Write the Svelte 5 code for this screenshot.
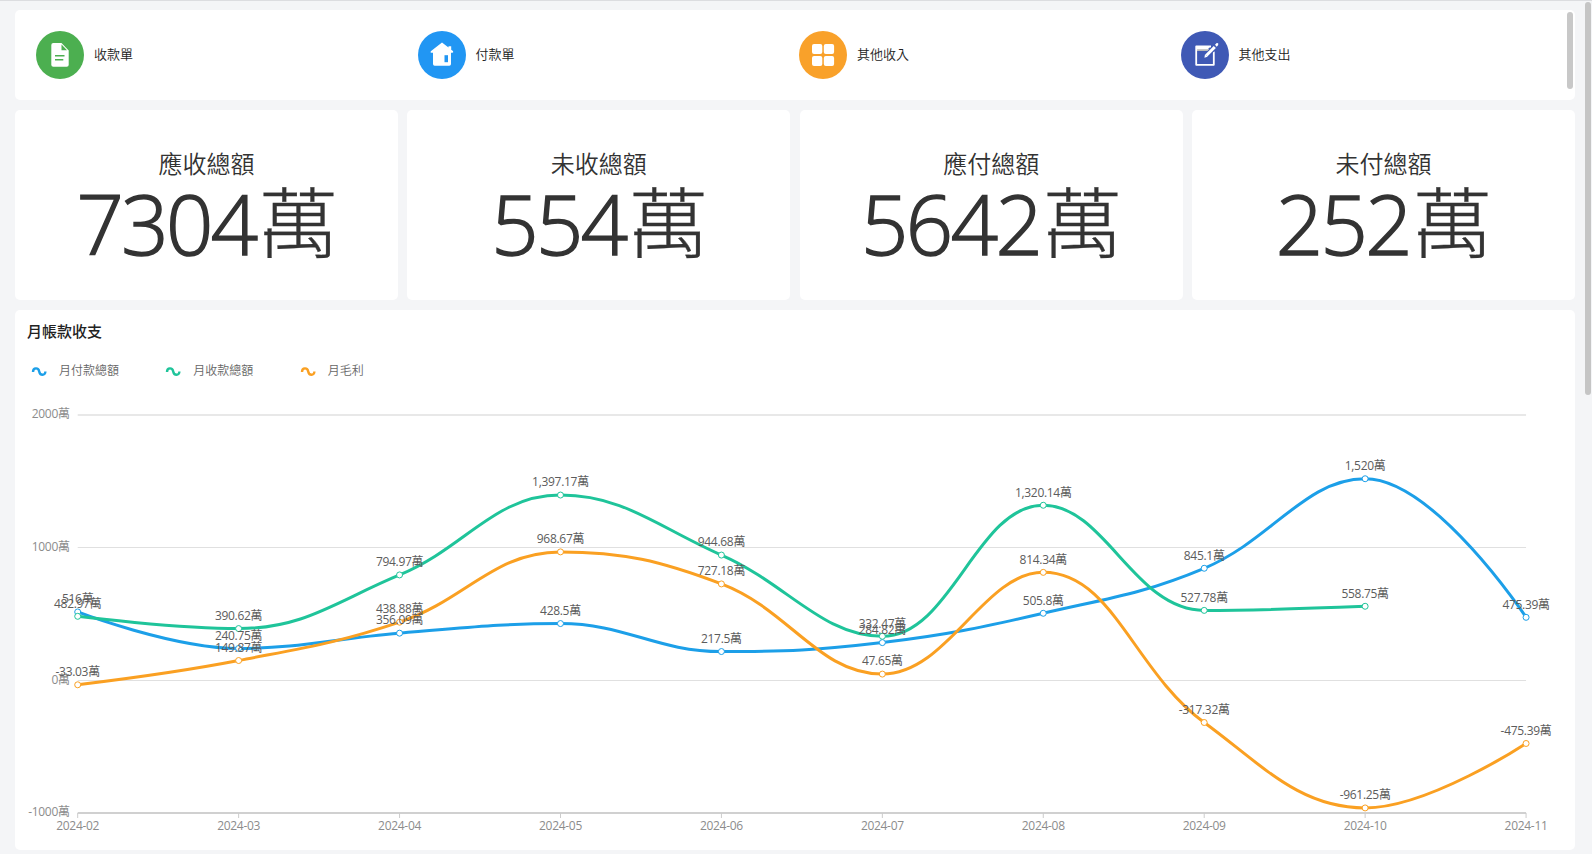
<script>
  const shortcuts = [
    { label: '收款單', color: '#4caf50', icon: 'doc' },
    { label: '付款單', color: '#2196f3', icon: 'home' },
    { label: '其他收入', color: '#f9a12a', icon: 'grid' },
    { label: '其他支出', color: '#3f59b5', icon: 'edit' },
  ];

  const totals = [
    { label: '應收總額', value: '7304' },
    { label: '未收總額', value: '554' },
    { label: '應付總額', value: '5642' },
    { label: '未付總額', value: '252' },
  ];

  const months = ['2024-02', '2024-03', '2024-04', '2024-05', '2024-06', '2024-07', '2024-08', '2024-09', '2024-10', '2024-11'];

  const series = [
    { name: '月付款總額', color: '#1c9fe8', data: [516, 240.75, 356.09, 428.5, 217.5, 284.82, 505.8, 845.1, 1520, 475.39] },
    { name: '月收款總額', color: '#1fc49a', data: [482.97, 390.62, 794.97, 1397.17, 944.68, 332.47, 1320.14, 527.78, 558.75] },
    { name: '月毛利', color: '#faa022', data: [-33.03, 149.87, 438.88, 968.67, 727.18, 47.65, 814.34, -317.32, -961.25, -475.39] },
  ];

  const ticks = [
    { value: 2000, y: 25 },
    { value: 1000, y: 157.5 },
    { value: 0, y: 290.5 },
    { value: -1000, y: 423 },
  ];
  const baseY = 423;

  const left = 62.7;
  const step = 160.93;
  const zeroY = 290.4;
  const unit = 0.13267;

  const px = (i) => left + i * step;
  const py = (v) => zeroY - v * unit;
  const fmt = (v) => v.toLocaleString('en-US', { maximumFractionDigits: 2 }) + '萬';
  const clamp = (v, a, b) => Math.max(Math.min(v, Math.max(a, b)), Math.min(a, b));

  // Smooth line whose control points never overshoot the neighbouring values
  function smoothPath(data) {
    const s = 0.4;
    const pts = data.map((v, i) => [px(i), py(v)]);
    let d = `M${pts[0][0]} ${pts[0][1]}`;
    let c0 = pts[0];
    for (let i = 1; i < pts.length; i++) {
      const p = pts[i - 1];
      const q = pts[i];
      const n = pts[i + 1];
      let c1 = q;
      let next = q;
      if (n) {
        const lp = Math.hypot(q[0] - p[0], q[1] - p[1]);
        const ln = Math.hypot(n[0] - q[0], n[1] - q[1]);
        const r = ln / (ln + lp);
        next = [0, 1].map((k) => clamp(q[k] + (n[k] - p[k]) * s * r, n[k], q[k]));
        c1 = [0, 1].map((k) => clamp(q[k] - ((next[k] - q[k]) * lp) / ln, p[k], q[k]));
        next = [0, 1].map((k) => q[k] + ((q[k] - c1[k]) * ln) / lp);
      }
      d += `C${c0[0]} ${c0[1]} ${c1[0]} ${c1[1]} ${q[0]} ${q[1]}`;
      c0 = next;
    }
    return d;
  }
</script>

<main>
  <section class="card shortcuts">
    {#each shortcuts as item}
      <div class="shortcut">
        <svg class="badge" width="48" height="48" viewBox="0 0 48 48">
          <circle cx="24" cy="24" r="24" fill={item.color} />
          {#if item.icon === 'doc'}
            <path fill="#fff" d="M17.300 12h8.200l7.200 7.500V33.700a2 2 0 0 1-2 2H17.300a2 2 0 0 1-2-2V14a2 2 0 0 1 2-2z" />
            <path fill={item.color} d="M25.500 13.500v5.800h5.500z" />
            <path stroke={item.color} stroke-width="1.600" d="M19 24.800h9.500M19 28.800h8.300" />
          {:else if item.icon === 'home'}
            <path fill="#fff" d="M24 11.500l6.500 5V15.200h2.700v3.500l1.800 1.300q.8 1.800-.6 1.800H33V33a1.700 1.700 0 0 1-1.700 1.700H16.700A1.700 1.700 0 0 1 15 33V21.800h-1.600q-1.400 0-.6-1.500z" />
            <rect x="26.500" y="24.200" width="3.500" height="7" fill={item.color} />
          {:else if item.icon === 'grid'}
            <g fill="#fff">
              <rect x="13" y="13" width="10.300" height="10" rx="2" />
              <rect x="24.800" y="13" width="10.300" height="10" rx="2" />
              <rect x="13" y="24.900" width="10.300" height="10" rx="2" />
              <rect x="24.800" y="24.900" width="10.300" height="10" rx="2" />
            </g>
          {:else}
            <path fill="#b9b9b9" d="M15 18h14l-2 2H15z" />
            <path fill="none" stroke="#fff" stroke-width="1.800" stroke-linejoin="round" d="M30 15.500H15.200v18.300h17.600V20.500" />
            <path fill="#fff" d="M15 15h14.500l-2.500 3.200H15z" />
            <path fill="none" stroke={item.color} stroke-width="5" d="M25.500 24.500L35 15" />
            <path fill="none" stroke="#fff" stroke-width="3" d="M25.300 24.500L33.800 16" />
            <path fill="#fff" d="M34 13.800l1.700-1.800 1.500.3v1.700l-1.500 1.800zM24 23.200l2.600 2.500-3.200 1z" />
          {/if}
        </svg>
        <span>{item.label}</span>
      </div>
    {/each}
    <i class="inner-thumb"></i>
  </section>

  <section class="totals">
    {#each totals as total}
      <article class="card total">
        <h2>{total.label}</h2>
        <p><span class="digits">{total.value}</span><span class="wan">萬</span></p>
      </article>
    {/each}
  </section>

  <section class="card chart">
    <h3>月帳款收支</h3>
    <ul>
      {#each series as s}
        <li>
          <svg width="16" height="12" viewBox="0 0 16 12">
            <path d="M2 6C2 1.300 7.500 1.300 8.200 5.500S14.400 10 14.400 5.500" fill="none" stroke={s.color} stroke-width="2.400" />
          </svg>
          <span>{s.name}</span>
        </li>
      {/each}
    </ul>
    <svg class="plot" width="1560" height="460" viewBox="0 0 1560 460">
      {#each ticks as t}
        <line x1={left} x2={px(9)} y1={t.y} y2={t.y} class:wide={t.value === 2000} class:axis={t.value === -1000} />
        <text class="tick" text-anchor="end" x={left - 8} y={t.y + 3}>{t.value}萬</text>
      {/each}
      {#each months as m, i}
        <line class="mark" x1={px(i)} x2={px(i)} y1={baseY} y2={baseY + 5} />
        <text class="tick" text-anchor="middle" x={px(i)} y={baseY + 17}>{m}</text>
      {/each}
      {#each series as s}
        <path d={smoothPath(s.data)} fill="none" stroke={s.color} stroke-width="3" />
        {#each s.data as v, i}
          <circle cx={px(i)} cy={py(v)} r="3" fill="#fff" stroke={s.color} />
        {/each}
      {/each}
      {#each series as s}
        {#each s.data as v, i}
          <text class="value" text-anchor="middle" x={px(i)} y={py(v) - 8.7}>{fmt(v)}</text>
        {/each}
      {/each}
    </svg>
  </section>
</main>
<i class="page-thumb"></i>

<style>
  :global(body) {
    background: #f4f5f7;
    overflow: hidden;
  }
  main {
    box-sizing: border-box;
    height: 854px;
    border-top: 1px solid #dcdde0;
    padding: 9px 17px 4px 15px;
    display: flex;
    flex-direction: column;
    gap: 10px;
    font-family: 'Open Sans', 'Noto Sans CJK TC', sans-serif;
    color: #333;
  }
  .card {
    background: #fff;
    border-radius: 5px;
  }
  .shortcuts {
    position: relative;
    height: 90px;
    flex: none;
    box-sizing: border-box;
    padding: 0 13px 0 21px;
    display: grid;
    grid-template-columns: repeat(4, 381.500px);
    align-items: center;
  }
  .shortcut {
    display: flex;
    align-items: center;
    gap: 10px;
    font-size: 13px;
    line-height: 20px;
  }
  .shortcut span {
    font-weight: 350;
    color: #222;
    padding-bottom: 3px;
  }
  .inner-thumb {
    position: absolute;
    right: 2px;
    top: 2px;
    width: 6px;
    height: 77px;
    border-radius: 3px;
    background: #c8c8c8;
  }
  .page-thumb {
    position: absolute;
    right: 1px;
    top: 2px;
    width: 6px;
    height: 393px;
    border-radius: 3px;
    background: #c5c5c5;
  }
  .totals {
    display: grid;
    grid-template-columns: repeat(4, 1fr);
    gap: 9.330px;
    height: 190px;
    flex: none;
  }
  .total {
    display: flex;
    flex-direction: column;
    align-items: center;
    padding-top: 36px;
    box-sizing: border-box;
  }
  h2, h3, p, ul {
    margin: 0;
    padding: 0;
  }
  h2 {
    font-size: 24px;
    line-height: 36px;
    font-weight: 350;
  }
  .total p {
    font-size: 84px;
    line-height: 82px;
    display: flex;
    font-weight: 350;
    letter-spacing: -2.600px;
  }
  .digits {
    font-size: 83px;
    -webkit-text-stroke: 1.500px #333;
  }
  .wan {
    font-weight: 300;
    font-size: 77px;
    letter-spacing: 0;
    margin-left: 4px;
    transform: scaleX(1.040);
    -webkit-text-stroke: 0.300px #333;
  }
  .chart {
    height: 540px;
    flex: none;
  }
  h3 {
    font-size: 15px;
    line-height: 22px;
    font-weight: 500;
    color: #222;
    padding: 10px 0 0 12px;
  }
  ul {
    display: flex;
    list-style: none;
    padding: 20px 0 8px 16px;
    height: 20px;
    font-size: 12px;
    line-height: 20px;
    font-weight: 350;
    color: #666;
  }
  li {
    display: flex;
    align-items: center;
    gap: 12px;
    margin-right: 46.300px;
  }
  li span {
    padding-bottom: 2px;
  }
  .plot {
    display: block;
  }
  .plot line {
    stroke: #e0e0e0;
    stroke-width: 1;
  }
  .plot line.wide {
    stroke: #e8e8e8;
    stroke-width: 2;
  }
  .plot line.axis {
    stroke: #d0d0d0;
    stroke-width: 2;
  }
  .plot line.mark {
    stroke: #ccc;
  }
  text {
    font-size: 12px;
    font-weight: 400;
    letter-spacing: -0.300px;
  }
  .tick {
    fill: #8c8c8c;
  }
  .value {
    fill: #5c5c5c;
  }
</style>
